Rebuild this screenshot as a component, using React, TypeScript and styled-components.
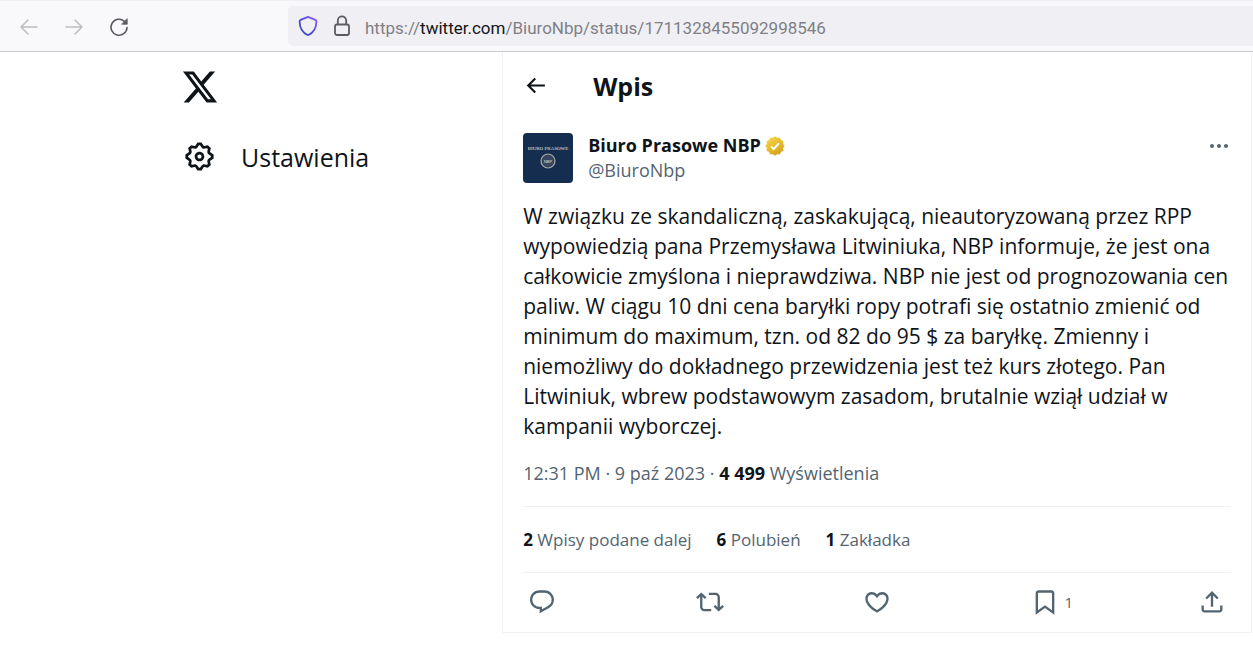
import React from "react";
import styled, { createGlobalStyle } from "styled-components";

const Global = createGlobalStyle`
  *, *::before, *::after { box-sizing: border-box; }
  body { margin: 0; background: #fff; color: #0f1419; font-family: "Open Sans", sans-serif; }
  button { border: 0; background: none; padding: 0; margin: 0; font: inherit; color: inherit; cursor: pointer; }
  a { color: inherit; text-decoration: none; }
  svg { display: block; flex: none; }
`;

const Toolbar = styled.header`
  display: flex;
  align-items: center;
  height: 52px;
  padding-left: 16px;
  background: #f9f9fb;
  border-top: 1px solid #f0f0f4;
  border-bottom: 1px solid #cccccf;
`;

const NavButtons = styled.nav`
  display: flex;
  gap: 19px;
  width: 272px;
  flex: none;
`;

const NavButton = styled.button<{ $dim?: boolean }>`
  display: grid;
  place-items: center;
  width: 26px;
  height: 28px;
  padding-top: 2px;
  color: ${(p) => (p.$dim ? "#bdbdc0" : "#5b5b62")};
`;

const AddressBar = styled.div`
  display: flex;
  align-items: center;
  gap: 12px;
  flex: 1;
  height: 40px;
  padding-left: 9px;
  background: #f0f0f4;
  border-radius: 5px 0 0 5px;
  color: #5b5b62;
`;

const Address = styled.p`
  margin: 0;
  padding-top: 3px;
  font: 17px/24px Roboto, sans-serif;
  color: #7f7f85;
  b { font-weight: 400; color: #15141a; }
`;

const Page = styled.div`
  display: flex;
  align-items: flex-start;
`;

const Sidebar = styled.aside`
  display: flex;
  flex-direction: column;
  align-items: flex-start;
  gap: 34px;
  width: calc(40% + 1px);
  padding: 16px 0 0 181px;
`;

const SettingsLink = styled.a`
  display: flex;
  align-items: center;
  gap: 25px;
  padding-left: 2px;
  font-size: 25px;
  line-height: 32px;
`;

const Post = styled.main`
  flex: 1;
  min-width: 0;
  margin-right: 1px;
  padding: 0 20px;
  border: 1px solid #eff3f4;
  border-top: 0;
`;

const TitleRow = styled.div`
  display: flex;
  align-items: center;
  gap: 45px;
  height: 67px;
`;

const Title = styled.h1`
  margin: 0;
  font-size: 25px;
  line-height: 30px;
  font-weight: 700;
`;

const Author = styled.div`
  display: flex;
  align-items: flex-start;
  gap: 15px;
  margin-top: 14px;
`;

const AuthorNames = styled.div`
  flex: 1;
  font-size: 18px;
  line-height: 25px;
`;

const DisplayName = styled.a`
  display: flex;
  align-items: center;
  gap: 3px;
  font-weight: 700;
`;

const Handle = styled.a`
  color: #536471;
`;

const MoreButton = styled.button`
  height: 25px;
  color: #536471;
`;

const Body = styled.p`
  margin: 18px 0 0;
  font-size: 21px;
  line-height: 30px;
`;

const Meta = styled.p`
  margin: 0;
  padding: 20px 0;
  font-size: 18px;
  line-height: 25px;
  color: #536471;
  strong { color: #0f1419; font-weight: 700; }
`;

const Stats = styled.div`
  display: flex;
  gap: 25px;
  padding: 20px 0;
  border: solid #eff3f4;
  border-width: 1px 0;
  font-size: 17px;
  line-height: 25px;
  color: #536471;
  strong { color: #0f1419; font-weight: 700; }
`;

const Actions = styled.div`
  display: flex;
  justify-content: space-between;
  align-items: center;
  height: 59px;
  padding: 0 5px 2px;
  color: #536471;
`;

const Action = styled.button`
  display: flex;
  align-items: center;
  gap: 6px;
  width: 28px;
  font-size: 15px;
  line-height: 20px;
`;

const paths = {
  x: "M18.244 2.25h3.308l-7.227 8.26 8.502 11.24H16.17l-5.214-6.817L4.99 21.75H1.68l7.73-8.835L1.254 2.25H8.08l4.713 6.231zm-1.161 17.52h1.833L7.084 4.126H5.117z",
  settings: "M10.54 1.75h2.92l1.57 2.36c.11.17.32.25.53.21l2.53-.59 2.17 2.17-.58 2.54c-.05.2.04.41.21.53l2.36 1.57v2.92l-2.36 1.57c-.17.12-.26.33-.21.53l.58 2.54-2.17 2.17-2.53-.59c-.21-.04-.42.04-.53.21l-1.57 2.36h-2.92l-1.58-2.36c-.11-.17-.32-.25-.52-.21l-2.54.59-2.17-2.17.58-2.54c.05-.2-.03-.41-.21-.53l-2.35-1.57v-2.92L4.1 8.97c.18-.12.26-.33.21-.53L3.73 5.9 5.9 3.73l2.54.59c.2.04.41-.04.52-.21l1.58-2.36zm1.07 2l-.98 1.47C10.05 6.08 9 6.5 7.99 6.27l-1.46-.34-.6.6.33 1.46c.24 1.01-.18 2.07-1.05 2.64l-1.46.98v.78l1.46.98c.87.57 1.29 1.63 1.05 2.64l-.33 1.46.6.6 1.46-.34c1.01-.23 2.06.19 2.64 1.05l.98 1.47h.78l.97-1.47c.58-.86 1.63-1.28 2.65-1.05l1.45.34.61-.6-.34-1.46c-.23-1.01.18-2.07 1.05-2.64l1.47-.98v-.78l-1.47-.98c-.87-.57-1.28-1.63-1.05-2.64l.34-1.46-.61-.6-1.45.34c-1.02.23-2.07-.19-2.65-1.05l-.97-1.47h-.78zM12 10.5c-.83 0-1.5.67-1.5 1.5s.67 1.5 1.5 1.5c.82 0 1.5-.67 1.5-1.5s-.68-1.5-1.5-1.5zM8.5 12c0-1.93 1.56-3.5 3.5-3.5 1.93 0 3.5 1.57 3.5 3.5s-1.57 3.5-3.5 3.5c-1.94 0-3.5-1.57-3.5-3.5z",
  back: "M7.414 13l5.043 5.04-1.414 1.42L3.586 12l7.457-7.46 1.414 1.42L7.414 11H21v2H7.414z",
  more: "M3 12c0-1.1.9-2 2-2s2 .9 2 2-.9 2-2 2-2-.9-2-2zm9 2c1.1 0 2-.9 2-2s-.9-2-2-2-2 .9-2 2 .9 2 2 2zm7 0c1.1 0 2-.9 2-2s-.9-2-2-2-2 .9-2 2 .9 2 2 2z",
  reply: "M1.751 10c0-4.42 3.584-8 8.005-8h4.366c4.49 0 8.129 3.64 8.129 8.13 0 2.96-1.607 5.68-4.196 7.11l-8.054 4.46v-3.69h-.067c-4.49.1-8.183-3.51-8.183-8.01zm8.005-6c-3.317 0-6.005 2.69-6.005 6 0 3.37 2.77 6.08 6.138 6.01l.351-.01h1.761v2.3l5.087-2.81c1.951-1.08 3.163-3.13 3.163-5.36 0-3.39-2.744-6.13-6.129-6.13H9.756z",
  repost: "M4.5 3.88l4.432 4.14-1.364 1.46L5.5 7.55V16c0 1.1.896 2 2 2H13v2H7.5c-2.209 0-4-1.79-4-4V7.55L1.432 9.48.068 8.02 4.5 3.88zM16.5 6H11V4h5.5c2.209 0 4 1.79 4 4v8.45l2.068-1.93 1.364 1.46-4.432 4.14-4.432-4.14 1.364-1.46 2.068 1.93V8c0-1.1-.896-2-2-2z",
  like: "M16.697 5.5c-1.222-.06-2.679.51-3.89 2.16l-.805 1.09-.806-1.09C9.984 6.01 8.526 5.44 7.304 5.5c-1.243.07-2.349.78-2.91 1.91-.552 1.12-.633 2.78.479 4.82 1.074 1.97 3.257 4.27 7.129 6.61 3.87-2.34 6.052-4.64 7.126-6.61 1.111-2.04 1.03-3.7.477-4.82-.561-1.13-1.666-1.84-2.908-1.91zm4.187 7.69c-1.351 2.48-4.001 5.12-8.379 7.67l-.503.3-.504-.3c-4.379-2.55-7.029-5.19-8.382-7.67-1.36-2.5-1.41-4.86-.514-6.67.887-1.79 2.647-2.91 4.601-3.01 1.651-.09 3.368.56 4.798 2.01 1.429-1.45 3.146-2.1 4.796-2.01 1.954.1 3.714 1.22 4.601 3.01.896 1.81.846 4.17-.514 6.67z",
  bookmark: "M4 4.5C4 3.12 5.119 2 6.5 2h11C18.881 2 20 3.12 20 4.5v18.44l-8-5.71-8 5.71V4.5zM6.5 4c-.276 0-.5.22-.5.5v14.56l6-4.29 6 4.29V4.5c0-.28-.224-.5-.5-.5h-11z",
  share: "M12 2.59l5.7 5.7-1.41 1.42L13 6.41V16h-2V6.41l-3.3 3.3-1.41-1.42L12 2.59zM21 15l-.02 3.51c0 1.38-1.12 2.49-2.5 2.49H5.5C4.11 21 3 19.88 3 18.5V15h2v3.5c0 .28.22.5.5.5h12.98c.28 0 .5-.22.5-.5L19 15h2z",
};

const Icon = ({ name, size }: { name: keyof typeof paths; size: number }) => (
  <svg width={size} height={size} viewBox="0 0 24 24" fill="currentColor" aria-hidden="true">
    <path d={paths[name]} />
  </svg>
);

const ArrowIcon = ({ flip }: { flip?: boolean }) => (
  <svg width="20" height="20" viewBox="0 0 20 20" fill="none" stroke="currentColor" strokeWidth="1.5" strokeLinecap="round" strokeLinejoin="round">
    <path d={flip ? "M2 10h16M11 3l7 7-7 7" : "M18 10H2M9 3l-7 7 7 7"} />
  </svg>
);

const ReloadIcon = () => (
  <svg width="20" height="20" viewBox="0 0 20 20" fill="none" stroke="currentColor" strokeWidth="1.6" strokeLinecap="round">
    <path d="M18 10.5a8 8 0 1 1-2.6-6.200l1 1" />
    <path d="M18.200 2v5.200H13z" fill="currentColor" strokeWidth="0.8" strokeLinejoin="round" />
  </svg>
);

const ShieldIcon = () => (
  <svg width="22" height="22" viewBox="0 0 22 22" fill="none" strokeWidth="1.8" strokeLinejoin="round">
    <defs>
      <linearGradient id="shield" x1="1" y1="0" x2="0" y2="1">
        <stop offset="0" stopColor="#9059ff" />
        <stop offset="0.6" stopColor="#4a4bd0" />
        <stop offset="1" stopColor="#3a55c0" />
      </linearGradient>
    </defs>
    <path d="M11 1.800l7.400 3.100q1 .4 1 1.500c0 6-2.600 11.200-8.400 13.800C5.200 17.600 2.600 12.400 2.600 6.400q0-1.100 1-1.500z" stroke="url(#shield)" />
  </svg>
);

const LockIcon = () => (
  <svg width="22" height="22" viewBox="0 0 22 22" fill="none" stroke="currentColor" strokeWidth="1.8">
    <rect x="4" y="9.500" width="14" height="10.500" rx="2" />
    <path d="M6.800 9.500V5.600a4.200 4.200 0 0 1 8.400 0v3.900" />
  </svg>
);

const Avatar = () => (
  <svg width="50" height="50" viewBox="0 0 50 50" role="img" aria-label="Biuro Prasowe">
    <rect width="50" height="50" rx="4" fill="#152e50" />
    <text x="25" y="17" textAnchor="middle" fontSize="5" fontFamily="Liberation Serif, serif" fill="#e0e4ea">BIURO PRASOWE</text>
    <circle cx="25" cy="28" r="7" fill="#34475f" stroke="#a9a9a2" strokeWidth="1.200" />
    <text x="25" y="30" textAnchor="middle" fontSize="4" fontFamily="Liberation Sans, sans-serif" fill="#e2e2dc">NBP</text>
  </svg>
);

const VerifiedIcon = () => (
  <svg width="22" height="22" viewBox="0 0 22 22" role="img" aria-label="Zweryfikowane konto">
    <defs>
      <linearGradient id="gold" x1="0.200" y1="0" x2="0.800" y2="1">
        <stop offset="0" stopColor="#f2d44a" />
        <stop offset="0.500" stopColor="#e6bb2b" />
        <stop offset="1" stopColor="#cf9f20" />
      </linearGradient>
    </defs>
    <path fill="url(#gold)" stroke="url(#gold)" strokeWidth="1.200" strokeLinejoin="round" d="M11 2l2 1.500 2.500-.3 1 2.300 2.300 1-.3 2.500L20 11l-1.500 2 .3 2.500-2.300 1-1 2.300-2.500-.3L11 20l-2-1.500-2.500.3-1-2.300-2.300-1 .3-2.500L2 11l1.500-2-.3-2.500 2.300-1 1-2.300 2.500.3z" />
    <path d="M7 11.300l2.700 2.700 5.200-5.700" fill="none" stroke="#fff" strokeWidth="1.900" />
  </svg>
);

export default function App() {
  return (
    <>
      <Global />
      <Toolbar>
        <NavButtons>
          <NavButton $dim aria-label="Wstecz"><ArrowIcon /></NavButton>
          <NavButton $dim aria-label="Dalej"><ArrowIcon flip /></NavButton>
          <NavButton aria-label="Odśwież"><ReloadIcon /></NavButton>
        </NavButtons>
        <AddressBar>
          <ShieldIcon />
          <LockIcon />
          <Address>https://<b>twitter.com</b>/BiuroNbp/status/1711328455092998546</Address>
        </AddressBar>
      </Toolbar>
      <Page>
        <Sidebar>
          <a href="#" aria-label="X"><Icon name="x" size={38} /></a>
          <SettingsLink href="#"><Icon name="settings" size={33} />Ustawienia</SettingsLink>
        </Sidebar>
        <Post>
          <TitleRow>
            <button aria-label="Wstecz"><Icon name="back" size={25} /></button>
            <Title>Wpis</Title>
          </TitleRow>
          <Author>
            <Avatar />
            <AuthorNames>
              <DisplayName href="#">Biuro Prasowe NBP <VerifiedIcon /></DisplayName>
              <Handle href="#">@BiuroNbp</Handle>
            </AuthorNames>
            <MoreButton aria-label="Więcej"><Icon name="more" size={24} /></MoreButton>
          </Author>
          <Body>
            W związku ze skandaliczną, zaskakującą, nieautoryzowaną przez RPP wypowiedzią pana Przemysława
            Litwiniuka, NBP informuje, że jest ona całkowicie zmyślona i nieprawdziwa. NBP nie jest od
            prognozowania cen paliw. W ciągu 10 dni cena baryłki ropy potrafi się ostatnio zmienić od
            minimum do maximum, tzn. od 82 do 95 $ za baryłkę. Zmienny i niemożliwy do dokładnego
            przewidzenia jest też kurs złotego. Pan Litwiniuk, wbrew podstawowym zasadom, brutalnie
            wziął udział w kampanii wyborczej.
          </Body>
          <Meta>12:31 PM · 9 paź 2023 · <strong>4 499</strong> Wyświetlenia</Meta>
          <Stats>
            <a href="#"><strong>2</strong> Wpisy podane dalej</a>
            <a href="#"><strong>6</strong> Polubień</a>
            <a href="#"><strong>1</strong> Zakładka</a>
          </Stats>
          <Actions>
            <Action aria-label="Odpowiedz"><Icon name="reply" size={28} /></Action>
            <Action aria-label="Podaj dalej"><Icon name="repost" size={28} /></Action>
            <Action aria-label="Polub"><Icon name="like" size={28} /></Action>
            <Action aria-label="Zakładka"><Icon name="bookmark" size={28} />1</Action>
            <Action aria-label="Udostępnij"><Icon name="share" size={28} /></Action>
          </Actions>
        </Post>
      </Page>
    </>
  );
}
